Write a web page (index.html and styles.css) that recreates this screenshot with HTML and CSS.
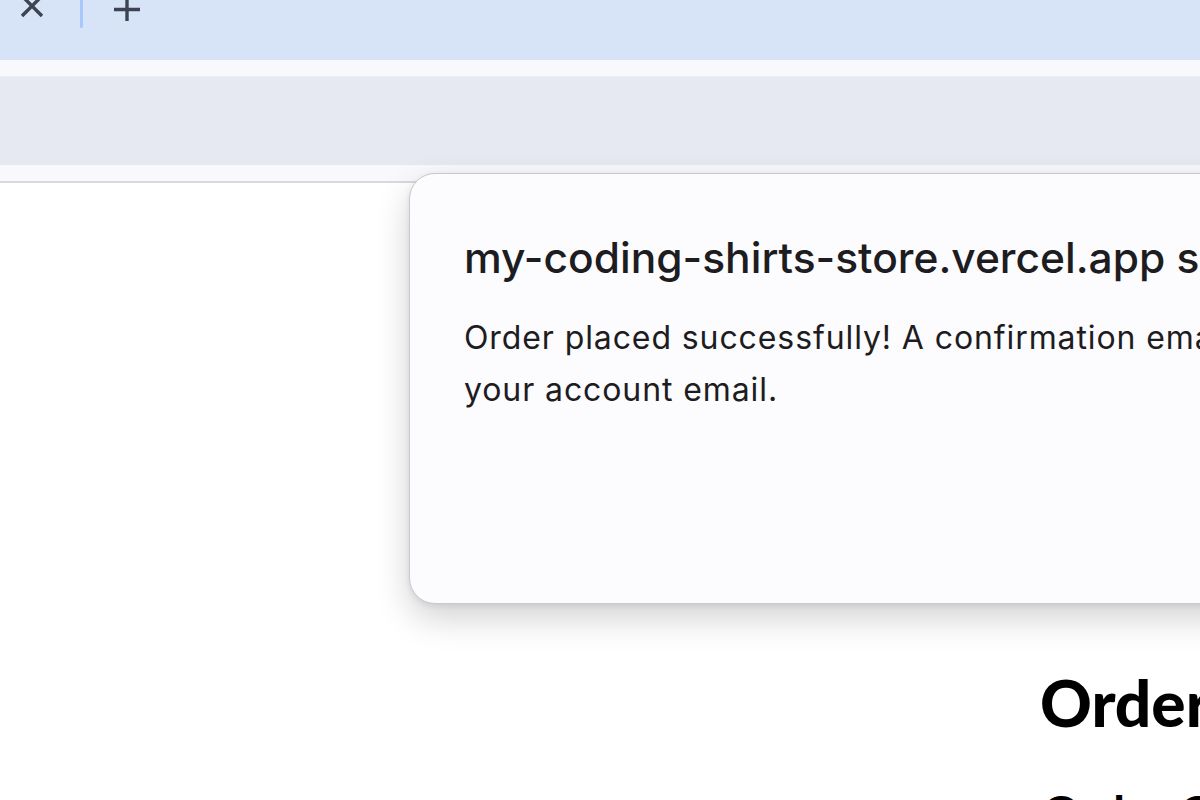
FILE: index.html
```html
<!DOCTYPE html>
<html>
	<head>
		<meta charset="UTF-8">
		<title>Order</title>
		<link rel="stylesheet" href="styles.css">
	</head>
	<body>
		<div class="tabstrip">
			<svg class="tab-close" width="24" height="20" viewBox="0 0 24 20">
				<path d="M2 -4 L22 16 M22 -4 L2 16" stroke="#3d4350" stroke-width="3.4" fill="none"/>
			</svg>
			<span class="tab-sep"></span>
			<svg class="tab-new" width="28" height="22" viewBox="0 0 28 22">
				<path d="M14 -6 V21 M1 9.5 H27" stroke="#3d4350" stroke-width="3.4" fill="none"/>
			</svg>
		</div>
		<div class="strip"></div>
		<div class="toolbar"></div>
		<div class="strip infobar"></div>
		<div class="page">
			<h1 class="order-title">Order</h1>
			<p class="order-sub">Order Confirmed</p>
		</div>
		<div class="alert">
			<h2 class="alert-title">my-coding-shirts-store.vercel.app says</h2>
			<p class="alert-text">Order placed successfully! A confirmation email has been sent to your account email.</p>
		</div>
	</body>
</html>
```
FILE: styles.css
```css
*{
	margin: 0;
	padding: 0;
	box-sizing: border-box;
}
html{
	height: 100%;
}
body{
	height: 100%;
	overflow: hidden;
	background-color: #fff;
	font-family: Inter, "Noto Sans", sans-serif;
}
/* browser chrome */
.tabstrip{
	display: flex;
	align-items: flex-start;
	height: 60px;
	padding-left: 20px;
	background-color: #d7e3f7;
}
.tab-close{
	display: block;
}
.tab-sep{
	width: 3px;
	height: 28px;
	margin-left: 36px;
	background-color: #a8c7fa;
	border-radius: 0 0 2px 2px;
}
.tab-new{
	display: block;
	margin-left: 30px;
}
.strip{
	height: 16px;
	background-color: #f8f8fd;
}
.toolbar{
	height: 89px;
	background-color: #e6e9f2;
	border-top: 1px solid #eceef4;
}
.infobar{
	height: 18px;
	border-bottom: 2px solid #d9d9e0;
}
/* page */
.page{
	padding: 488px 0 0 1040px;
	white-space: nowrap;
}
.order-title{
	font-family: Lato, "DejaVu Sans", sans-serif;
	font-weight: 900;
	font-size: 64px;
	line-height: 64px;
	color: #000;
}
.order-sub{
	margin-top: 48px;
	margin-left: 2px;
	font-family: Lato, "DejaVu Sans", sans-serif;
	font-weight: 700;
	font-size: 48px;
	line-height: 60px;
	color: #000;
}
/* alert dialog */
.alert{
	position: absolute;
	top: 173px;
	left: 409px;
	width: 1200px;
	height: 431px;
	padding: 56px 0 0 54px;
	background-color: #fcfbfe;
	border: 1px solid #c9c8cd;
	border-radius: 26px;
	box-shadow: 0 14px 34px rgba(0, 0, 0, 0.18), 0 2px 6px rgba(0, 0, 0, 0.08);
	white-space: nowrap;
	overflow: hidden;
	color: #1d1c21;
}
.alert-title{
	font-size: 42.5px;
	font-weight: 500;
	line-height: 56px;
}
.alert-text{
	margin-top: 26px;
	width: 1080px;
	white-space: normal;
	font-size: 32px;
	letter-spacing: 0.9px;
	line-height: 52px;
}
```
